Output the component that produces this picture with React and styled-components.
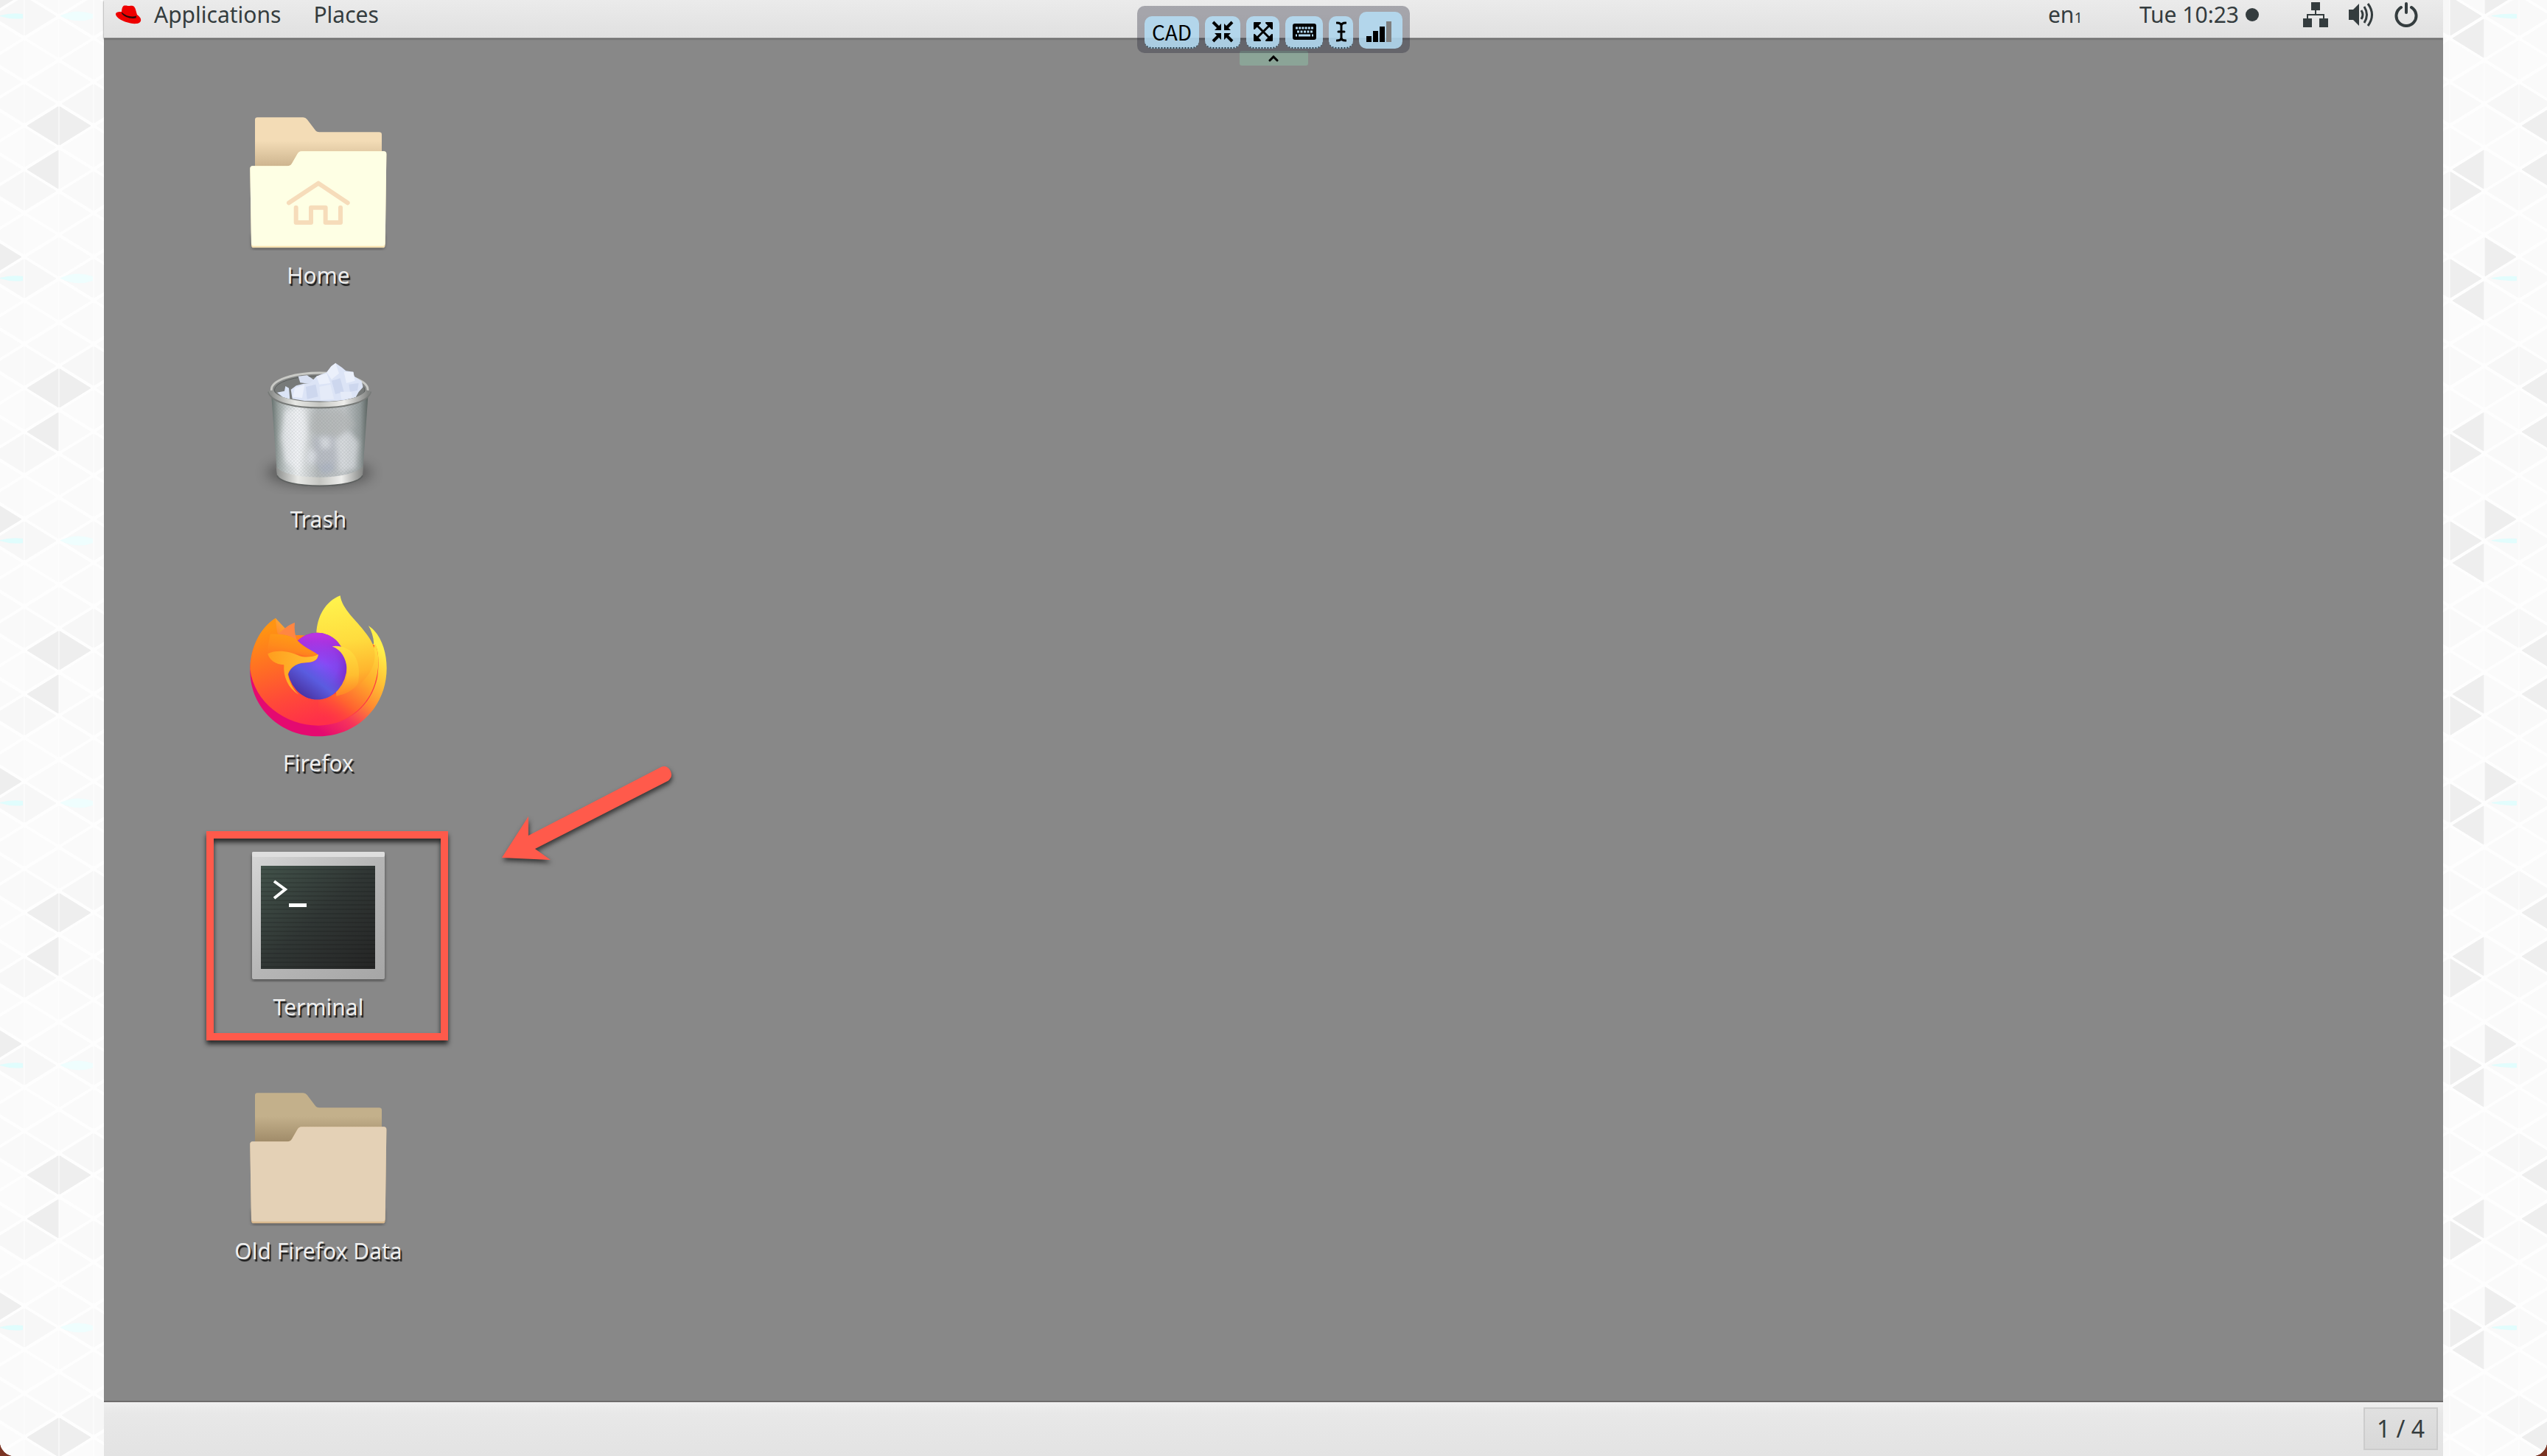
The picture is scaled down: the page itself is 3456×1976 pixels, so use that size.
import React from "react";
import styled, { createGlobalStyle } from "styled-components";

const GlobalStyle = createGlobalStyle`
  *, *::before, *::after { box-sizing: border-box; }
  html, body { margin: 0; background: #7a3424; }
  body { font-family: "Noto Sans", "Open Sans", sans-serif; }
  button {
    margin: 0;
    padding: 0;
    border: 0;
    background: none;
    color: inherit;
    font: inherit;
    cursor: pointer;
  }
  svg { display: block; }
`;

const ink = "#343c3e";
const accent = "#ff5a4b";

const Viewer = styled.div`
  position: relative;
  display: flex;
  min-height: 100vh;
  overflow: hidden;
  background: #fdfdfd;
  border-radius: 0 0 20px 20px;
`;

const Flank = styled.div`
  flex: 0 0 141px;
  background: #fefefe;
`;

const Session = styled.div`
  flex: 1;
  min-width: 0;
  display: flex;
  flex-direction: column;
  background: #888888;
`;

const TopBar = styled.header`
  display: flex;
  justify-content: space-between;
  height: 52px;
  padding: 0 34px 12px 16px;
  color: ${ink};
  font-size: 30px;
  line-height: 40px;
  background: linear-gradient(#ebebeb, #e0e0e0);
  border-bottom: 1px solid #a0a0a0;
  box-shadow: 0 1px 2px #5c5c5c;
`;

const BarGroup = styled.div`
  display: flex;
  align-items: center;
  gap: ${(p) => p.$gap}px;
`;

const MenuButton = styled.button`
  display: flex;
  align-items: ${(p) => (p.$baseline ? "baseline" : "center")};
  gap: ${(p) => p.$gap || 0}px;
  height: 40px;
`;

const LayoutIndex = styled.span`
  font-size: 20px;
`;

const Dot = styled.span`
  width: 18px;
  height: 18px;
  border-radius: 50%;
  background: ${ink};
`;

const Surface = styled.main`
  position: relative;
  flex: 1;
  display: flex;
  flex-direction: column;
  align-items: flex-start;
  gap: 85px;
  padding: 98px 0 0 141px;
`;

const Launcher = styled.button`
  display: flex;
  flex-direction: column;
  align-items: center;
  gap: 12px;
  width: 300px;
`;

const LauncherLabel = styled.span`
  color: #eeeeee;
  font-size: 30px;
  line-height: 44px;
  white-space: nowrap;
  text-shadow: 2px 3px 1px #1c1c1c;
`;

const Highlight = styled.div`
  position: absolute;
  left: 139px;
  top: 1076px;
  width: 328px;
  height: 284px;
  border: 10px solid ${accent};
  filter: drop-shadow(0 5px 3px rgba(0, 0, 0, 0.7));
`;

const Arrow = styled.svg`
  position: absolute;
  left: 529px;
  top: 978px;
  overflow: visible;
  filter: drop-shadow(1px 4px 3px rgba(0, 0, 0, 0.6));
`;

const BottomPanel = styled.footer`
  display: flex;
  justify-content: flex-end;
  height: 75px;
  padding: 7px 7px;
  background: linear-gradient(#f0f0f0, #e8e8e8 14px, #e3e3e3);
  border-top: 2px solid #6e6c6c;
`;

const Pager = styled.button`
  width: 101px;
  height: 58px;
  color: ${ink};
  font-size: 32px;
  line-height: 50px;
  background: linear-gradient(#e0e0e0, #d8d8d8);
  border: 2px solid #cccccc;
`;

const Remote = styled.div`
  position: absolute;
  top: 8px;
  left: 50%;
  transform: translateX(-50%);
  display: flex;
  flex-direction: column;
  align-items: center;
`;

const RemoteBar = styled.div`
  position: relative;
  z-index: 1;
  display: flex;
  align-items: flex-end;
  gap: 8px;
  padding: 8px 10px 6px;
  border-radius: 10px;
  background: rgba(30, 30, 48, 0.33);
`;

const RemoteButton = styled.button`
  display: flex;
  align-items: center;
  justify-content: center;
  width: ${(p) => p.$width}px;
  height: ${(p) => (p.$tall ? 50 : 44)}px;
  padding-top: ${(p) => (p.$tall ? 6 : 0)}px;
  padding-right: ${(p) => (p.$tall ? 6 : 0)}px;
  border-radius: 10px;
  border-bottom: 2px ${(p) => (p.$tall ? "solid transparent" : "dotted #2d4452")};
  background: rgba(182, 222, 246, 0.86);
  color: #000000;
  font-family: "Noto Sans CJK SC", "Noto Sans", sans-serif;
  font-size: 28px;
  line-height: 40px;
`;

const RemoteTab = styled.button`
  display: flex;
  align-items: center;
  justify-content: center;
  width: 93px;
  height: 20px;
  margin-top: -3px;
  border-radius: 3px;
  background: #8ba497;
`;

const ROW = 356 / 6;
const COL = 47;

function hash(a, b) {
  return (a * 7 + b * 13 + a * b * 5) % 4;
}

function TrianglePattern({ id, start, dark, glints }) {
  const tones = ["#f7f7f7", "#fafafa", "#f9f9f9", "#fbfbfb"];
  const cells = [];
  for (let c = 0; c < 4; c += 1) {
    const left = start + c * COL;
    const right = left + COL;
    for (let r = -1; r < 7; r += 1) {
      const leftY = (c % 2 ? 52 : 22) + r * ROW;
      const rightY = (c % 2 ? 22 : 52) + r * ROW;
      const row = (r + 6) % 6;
      cells.push({
        key: `l${c}-${r}`,
        d: `M${left + 4} ${leftY}L${right - 1} ${leftY - 26}V${leftY + 26}Z`,
        fill: dark.includes(`l${c}-${row}`) ? "#eeeeee" : tones[hash(c, row)],
      });
      cells.push({
        key: `r${c}-${r}`,
        d: `M${right - 4} ${rightY}L${left + 1} ${rightY - 26}V${rightY + 26}Z`,
        fill: dark.includes(`r${c}-${row}`) ? "#eeeeee" : tones[hash(c + 1, row + 2)],
      });
    }
  }
  return (
    <svg width="100%" height="100%" aria-hidden="true">
      <defs>
        <pattern id={id} width="188" height="356" patternUnits="userSpaceOnUse">
          {cells.map((cell) => (
            <path key={cell.key} d={cell.d} fill={cell.fill} stroke={cell.fill} strokeWidth="1" strokeLinejoin="round" />
          ))}
          {glints.map((g) => (
            <path
              key={g.x}
              d={`M${g.x} 21Q${g.x + g.w / 2} ${22 - g.h} ${g.x + g.w} 19V25Q${g.x + g.w / 2} ${22 + g.h} ${g.x} 22Z`}
              fill={g.fill}
            />
          ))}
        </pattern>
      </defs>
      <rect width="100%" height="100%" fill={`url(#${id})`} />
    </svg>
  );
}

function HatIcon() {
  return (
    <svg width="35" height="28" viewBox="0 0 35 28" aria-hidden="true">
      <path
        d="M8 12C8 6 9 2 12 1.500C15 1 16 2.500 19 2C23 1.500 25.500 2 27 7L29 14C32 16 35 19 34 22.500C33 26 27 27 20 25.500C10 23.500 0 18 0 13C0 10.500 4 9.500 8 10Z"
        fill="#ee0000"
      />
      <path d="M8 12C11 17 20 20 27.500 18.500L28 15.500C21 18 12 15 8.500 10.500Z" fill="#2a0a0a" />
    </svg>
  );
}

function NetworkIcon() {
  return (
    <svg width="34" height="34" viewBox="0 0 34 34" aria-hidden="true">
      <g fill={ink}>
        <rect x="11" width="12" height="11" />
        <rect y="22" width="12" height="12" />
        <rect x="22" y="22" width="12" height="12" />
      </g>
      <path d="M17 10V17M6 23V17H28V23" fill="none" stroke={ink} strokeWidth="2" />
    </svg>
  );
}

function VolumeIcon() {
  return (
    <svg width="34" height="32" viewBox="0 0 34 32" aria-hidden="true">
      <path d="M0 9H6L14 1V31L6 23H0Z" fill={ink} />
      <g fill="none" stroke={ink} strokeWidth="3">
        <path d="M17 10Q21 16 17 22" />
        <path d="M21 5Q28 16 21 27" />
        <path d="M26 1Q37 16 26 31" />
      </g>
    </svg>
  );
}

function PowerIcon() {
  return (
    <svg width="32" height="34" viewBox="0 0 32 34" aria-hidden="true">
      <path d="M9 7A13.500 13.500 0 1 0 23 7" fill="none" stroke={ink} strokeWidth="4" strokeLinecap="round" />
      <path d="M16 2V14" stroke={ink} strokeWidth="4" strokeLinecap="round" />
    </svg>
  );
}

function FolderIcon({ id, back, backEdge, front, lip, home }) {
  return (
    <svg width="200" height="190" viewBox="96 60 600 570" aria-hidden="true">
      <defs>
        <linearGradient id={`${id}-back`} x1="0" y1="0" x2="0" y2="1">
          <stop offset="0.450" stopColor={back} />
          <stop offset="1" stopColor={backEdge} />
        </linearGradient>
        <filter id={`${id}-soft`} x="-10%" y="-10%" width="120%" height="120%">
          <feGaussianBlur stdDeviation="7" />
        </filter>
      </defs>
      <rect x="124" y="560" width="542" height="64" rx="12" fill="#000000" opacity="0.350" filter={`url(#${id}-soft)`} />
      <path
        d="M138 98Q138 88 148 88H334Q344 88 350 96L382 138Q388 148 400 148H643Q654 148 654 158V300H138Z"
        fill={`url(#${id}-back)`}
      />
      <path
        d="M118 297Q118 286 128 286H270Q282 286 288 276L310 238Q316 226 328 226H662Q673 226 673 237L668 608Q668 619 658 619H133Q123 619 123 608Z"
        fill={lip}
      />
      <path
        d="M118 297Q118 286 128 286H270Q282 286 288 276L310 238Q316 226 328 226H662Q673 226 673 237L668 600Q668 611 658 611H133Q123 611 123 600Z"
        fill={front}
      />
      {home && (
        <g fill="none" stroke="#f6dcba" strokeWidth="18" strokeLinecap="round" strokeLinejoin="round">
          <path d="M276 436L396 356L515 436" />
          <path d="M305 455V516H366V455H425V516H486V455" />
        </g>
      )}
    </svg>
  );
}

function TrashIcon() {
  return (
    <svg width="200" height="190" viewBox="96 63 600 570" aria-hidden="true">
      <defs>
        <linearGradient id="bin-body" x1="0" x2="1">
          <stop offset="0" stopColor="#66716e" />
          <stop offset="0.070" stopColor="#9aa3a1" />
          <stop offset="0.160" stopColor="#c9cfd0" />
          <stop offset="0.270" stopColor="#eceff0" />
          <stop offset="0.480" stopColor="#b4b9ba" />
          <stop offset="0.750" stopColor="#c2c6c8" />
          <stop offset="0.920" stopColor="#929a9a" />
          <stop offset="1" stopColor="#59625f" />
        </linearGradient>
        <linearGradient id="bin-rim" x1="0" x2="1">
          <stop offset="0" stopColor="#8c8e8c" />
          <stop offset="0.250" stopColor="#e8e9e6" />
          <stop offset="0.500" stopColor="#c4c5c1" />
          <stop offset="0.750" stopColor="#eeeeec" />
          <stop offset="1" stopColor="#828482" />
        </linearGradient>
        <pattern id="bin-mesh" width="10" height="10" patternUnits="userSpaceOnUse" patternTransform="rotate(45)">
          <path d="M0 0H10M0 0V10" stroke="#6e7676" strokeWidth="2" opacity="0.350" />
        </pattern>
        <filter id="bin-soft" x="-30%" y="-60%" width="160%" height="220%">
          <feGaussianBlur stdDeviation="26" />
        </filter>
        <filter id="bin-paper" x="-10%" y="-10%" width="120%" height="120%">
          <feGaussianBlur stdDeviation="9" />
        </filter>
      </defs>
      <ellipse cx="400" cy="545" rx="215" ry="52" fill="#000000" opacity="0.350" filter="url(#bin-soft)" />
      <ellipse cx="401" cy="206" rx="196" ry="68" fill="#858786" stroke="#c9cac6" strokeWidth="9" />
      <ellipse cx="401" cy="208" rx="184" ry="58" fill="#777a79" stroke="#585b5a" strokeWidth="3" />
      <path d="M205 235L228 552C250 615 552 615 576 552L598 235C560 290 245 290 205 235Z" fill="url(#bin-body)" />
      <g filter="url(#bin-paper)" opacity="0.700">
        <path d="M260 290L340 284L350 380L320 540L262 500L244 400Z" fill="#f3f4f8" />
        <path d="M370 400L455 390L520 470L450 520L380 510Z" fill="#b9bdc7" />
        <path d="M465 410L520 375L560 420L548 530L480 540Z" fill="#dfe2e6" />
        <path d="M370 300L500 290L545 350L470 400L360 380Z" fill="#b5b8b8" />
        <path d="M400 400L440 402L446 440L410 450ZM360 440L390 470L370 520L345 490Z" fill="#e4e7ee" />
        <path d="M390 520L440 500L470 530L420 552Z" fill="#aab2c4" />
      </g>
      <path d="M205 235L228 552C250 615 552 615 576 552L598 235C560 290 245 290 205 235Z" fill="url(#bin-mesh)" />
      <path d="M224 520C262 578 540 578 579 515L576 556C550 614 250 614 228 556Z" fill="url(#bin-rim)" />
      <path d="M228 556C250 612 552 612 576 556" fill="none" stroke="#5d605f" strokeWidth="5" />
      <g>
        <path d="M228 218L258 212L262 192L276 200L280 246L250 236Z" fill="#dbe4f6" />
        <path d="M314 152L350 148L380 168L370 184L322 178Z" fill="#d8e0f2" />
        <path d="M284 206L306 190L336 182L362 180L388 152L430 136L448 112L466 98L492 116L508 130L538 134L542 152L572 172L578 196L560 216L548 238L500 250L440 254L340 252L290 244Z" fill="#dce4f6" />
        <path d="M448 112L466 98L480 140L450 165L430 136ZM388 152L430 140L445 180L400 185ZM500 134L538 134L545 170L510 180ZM300 200L340 186L330 240L292 236Z" fill="#ebf0fb" />
        <path d="M345 195L385 185L395 235L350 245ZM450 170L485 160L500 215L465 225ZM520 185L560 180L555 210L525 215Z" fill="#cdd7ee" />
        <path d="M400 195L445 185L460 245L405 248ZM485 215L530 215L535 240L490 246Z" fill="#e5ebf8" />
      </g>
      <path d="M202 212C220 290 580 290 600 212" fill="none" stroke="#777a78" strokeWidth="26" />
      <path d="M203 210C222 286 578 286 599 210" fill="none" stroke="url(#bin-rim)" strokeWidth="20" />
    </svg>
  );
}

function FirefoxIcon() {
  return (
    <svg width="200" height="190" viewBox="96 96 600 570" overflow="visible" aria-hidden="true">
      <defs>
        <linearGradient id="fx-outer" gradientUnits="userSpaceOnUse" x1="610" y1="200" x2="270" y2="640">
          <stop offset="0.100" stopColor="#fff04a" />
          <stop offset="0.300" stopColor="#ffc135" />
          <stop offset="0.480" stopColor="#ff8a30" />
          <stop offset="0.660" stopColor="#f7355a" />
          <stop offset="0.850" stopColor="#e40a70" />
        </linearGradient>
        <linearGradient id="fx-body" gradientUnits="userSpaceOnUse" x1="250" y1="200" x2="370" y2="600">
          <stop offset="0" stopColor="#ff9412" />
          <stop offset="0.400" stopColor="#ff6a26" />
          <stop offset="0.700" stopColor="#ff4a38" />
          <stop offset="1" stopColor="#ff3049" />
        </linearGradient>
        <linearGradient id="fx-head" gradientUnits="userSpaceOnUse" x1="290" y1="250" x2="270" y2="350">
          <stop offset="0" stopColor="#ff9a16" />
          <stop offset="0.500" stopColor="#ff8a1c" />
          <stop offset="1" stopColor="#ff7a22" stopOpacity="0" />
        </linearGradient>
        <linearGradient id="fx-sweep" gradientUnits="userSpaceOnUse" x1="630" y1="310" x2="420" y2="590">
          <stop offset="0" stopColor="#ffd93c" />
          <stop offset="0.350" stopColor="#ffa92b" />
          <stop offset="0.700" stopColor="#ff6230" />
          <stop offset="1" stopColor="#ff3a40" stopOpacity="0" />
        </linearGradient>
        <linearGradient id="fx-flame" gradientUnits="userSpaceOnUse" x1="500" y1="100" x2="560" y2="470">
          <stop offset="0" stopColor="#fff24c" />
          <stop offset="0.450" stopColor="#ffdc3e" />
          <stop offset="0.800" stopColor="#ffb52e" />
          <stop offset="1" stopColor="#ff8c28" />
        </linearGradient>
        <linearGradient id="fx-inner" gradientUnits="userSpaceOnUse" x1="500" y1="290" x2="510" y2="490">
          <stop offset="0" stopColor="#ffe040" />
          <stop offset="0.600" stopColor="#ffbe30" />
          <stop offset="1" stopColor="#ff8426" />
        </linearGradient>
        <radialGradient id="fx-globe" gradientUnits="userSpaceOnUse" cx="390" cy="370" r="150">
          <stop offset="0" stopColor="#8a50ff" />
          <stop offset="0.550" stopColor="#8144ec" />
          <stop offset="1" stopColor="#7a22b8" />
        </radialGradient>
        <linearGradient id="fx-globe-low" gradientUnits="userSpaceOnUse" x1="430" y1="360" x2="330" y2="490">
          <stop offset="0" stopColor="#5a5ce0" stopOpacity="0" />
          <stop offset="0.500" stopColor="#5a5ce0" />
          <stop offset="1" stopColor="#4a34a4" />
        </linearGradient>
        <linearGradient id="fx-globe-top" x1="0" y1="0" x2="0" y2="1">
          <stop offset="0.050" stopColor="#b933e2" />
          <stop offset="0.500" stopColor="#a030e0" stopOpacity="0" />
        </linearGradient>
        <linearGradient id="fx-cheek" x1="0" x2="1">
          <stop offset="0" stopColor="#ff9d1e" />
          <stop offset="1" stopColor="#ffc232" />
        </linearGradient>
      </defs>
      <path
        d="M118 390C118 300 160 215 222 177L300 260L600 300L622 280C620 252 612 228 600 208C648 238 674 310 674 380C674 540 550 658 396 658C245 658 118 545 118 390Z"
        fill="url(#fx-outer)"
      />
      <path
        d="M118 385C118 300 158 215 222 177C224 205 226 228 232 246C320 240 600 260 630 290C644 320 642 380 636 420C610 540 510 614 396 614C260 614 135 520 118 385Z"
        fill="url(#fx-body)"
      />
      <path d="M628 280C650 340 642 420 606 490C560 570 480 614 396 614V490C520 500 590 420 610 330Z" fill="url(#fx-sweep)" />
      <path
        d="M388 240C390 170 425 108 485 85C492 140 550 185 588 236C610 264 626 290 626 330C624 400 560 470 470 494L440 300Z"
        fill="url(#fx-flame)"
      />
      <ellipse cx="391" cy="372" rx="121" ry="136" fill="url(#fx-globe)" />
      <ellipse cx="391" cy="372" rx="121" ry="136" fill="url(#fx-globe-top)" />
      <ellipse cx="391" cy="372" rx="121" ry="136" fill="url(#fx-globe-low)" />
      <path d="M452 292C470 288 494 292 515 303C556 325 568 380 558 440C540 470 505 488 470 492C505 460 515 420 512 380C508 340 490 306 452 292Z" fill="url(#fx-inner)" />
      <path d="M232 246C250 222 275 204 300 195C297 220 300 245 310 270Z" fill="#ff8642" />
      <path
        d="M200 242C250 238 285 248 310 268C340 298 370 308 395 326C392 350 378 356 340 358C300 360 275 385 272 412C280 450 300 480 330 496L250 500L180 380Z"
        fill="url(#fx-body)"
      />
      <path
        d="M200 242C262 240 295 254 310 268C340 298 370 308 395 326C370 334 350 334 332 328C300 312 240 320 180 350Z"
        fill="url(#fx-head)"
      />
      <path
        d="M190 322C225 302 282 312 318 330C340 338 370 336 396 325C392 350 376 356 344 358C300 360 276 385 272 408C284 450 296 470 316 488C272 462 252 414 256 367C222 366 196 346 190 322Z"
        fill="url(#fx-cheek)"
      />
    </svg>
  );
}

function TerminalIcon() {
  return (
    <svg width="200" height="190" viewBox="0 0 200 190" aria-hidden="true">
      <defs>
        <linearGradient id="tm-case" x1="0" y1="0" x2="1" y2="1">
          <stop offset="0" stopColor="#d6d6d6" />
          <stop offset="0.500" stopColor="#b6b6b6" />
          <stop offset="1" stopColor="#a6a6a6" />
        </linearGradient>
        <linearGradient id="tm-screen" x1="0" y1="0" x2="1" y2="1">
          <stop offset="0" stopColor="#42524a" />
          <stop offset="0.500" stopColor="#303634" />
          <stop offset="1" stopColor="#252525" />
        </linearGradient>
        <pattern id="tm-lines" width="6" height="6" patternUnits="userSpaceOnUse">
          <rect width="6" height="2" fill="#000000" opacity="0.120" />
        </pattern>
        <filter id="tm-soft" x="-10%" y="-10%" width="120%" height="120%">
          <feGaussianBlur stdDeviation="2" />
        </filter>
      </defs>
      <rect x="10" y="16" width="180" height="172" rx="2" fill="#000000" opacity="0.450" filter="url(#tm-soft)" />
      <rect x="10" y="13" width="180" height="173" rx="2" fill="url(#tm-case)" />
      <rect x="10" y="13" width="180" height="7" rx="2" fill="#dedede" />
      <rect x="22" y="32" width="155" height="140" fill="url(#tm-screen)" />
      <rect x="22" y="32" width="155" height="140" fill="url(#tm-lines)" />
      <path d="M40 53L55 64L40 76" fill="none" stroke="#ffffff" strokeWidth="4" />
      <rect x="60" y="83" width="24" height="5" fill="#ffffff" />
    </svg>
  );
}

function CompressIcon() {
  return (
    <svg width="30" height="30" viewBox="0 0 30 30" aria-hidden="true">
      <path d="M2 2L9 9M28 2L21 9M2 28L9 21M28 28L21 21" stroke="#000000" strokeWidth="4" />
      <path d="M13 4V13H4ZM17 4V13H26ZM13 26V17H4ZM17 26V17H26Z" fill="#000000" />
    </svg>
  );
}

function ExpandIcon() {
  return (
    <svg width="26" height="26" viewBox="0 0 26 26" aria-hidden="true">
      <path d="M4 4L22 22M22 4L4 22" stroke="#000000" strokeWidth="3" />
      <path
        d="M1 1H9L1 9ZM25 1H17L25 9ZM1 25H9L1 17ZM25 25H17L25 17Z"
        fill="#000000"
        stroke="#000000"
        strokeWidth="2"
        strokeLinejoin="round"
      />
    </svg>
  );
}

function KeyboardIcon() {
  return (
    <svg width="32" height="22" viewBox="0 0 32 22" aria-hidden="true">
      <rect width="32" height="22" rx="3" fill="#000000" />
      <g fill="none" stroke="#b2d8f0" strokeWidth="3">
        <path d="M4 6H28" strokeDasharray="3 1.200" />
        <path d="M6 11H27" strokeDasharray="3 1.500" />
        <path d="M4 16H6M8 16H24M26 16H28" />
      </g>
    </svg>
  );
}

function CursorIcon() {
  return (
    <svg width="14" height="28" viewBox="0 0 14 28" aria-hidden="true">
      <path
        d="M1 2C4 2 7 3 7 6C7 3 10 2 13 2M7 5V23M1 26C4 26 7 25 7 22C7 25 10 26 13 26M3 14H11"
        fill="none"
        stroke="#000000"
        strokeWidth="3"
        strokeLinecap="round"
      />
    </svg>
  );
}

function SignalIcon() {
  return (
    <svg width="34" height="28" viewBox="0 0 34 28" aria-hidden="true">
      <path d="M0 20H7V28H0ZM9 13H16V28H9ZM18 7H25V28H18Z" fill="#000000" />
      <path d="M27 0H34V28H27Z" fill="#7f7f7f" />
    </svg>
  );
}

const launchers = [
  {
    name: "Home",
    icon: <FolderIcon id="home" back="#f3dcb6" backEdge="#c9b08a" front="#feffe4" lip="#f7e3b4" home />,
  },
  { name: "Trash", icon: <TrashIcon /> },
  { name: "Firefox", icon: <FirefoxIcon /> },
  { name: "Terminal", icon: <TerminalIcon /> },
  {
    name: "Old Firefox Data",
    icon: <FolderIcon id="data" back="#c3b08b" backEdge="#9c8765" front="#e4d1b6" lip="#d9b98f" />,
  },
];

export default function App() {
  return (
    <>
      <GlobalStyle />
      <Viewer>
        <Flank>
          <TrianglePattern
            id="flank-left"
            start={-14}
            dark={["l1-2", "l1-3", "r2-2", "r0-5"]}
            glints={[
              { x: 0, w: 31, h: 5, fill: "#e0fdfd" },
              { x: 82, w: 44, h: 11, fill: "#effefe" },
            ]}
          />
        </Flank>
        <Session>
          <TopBar>
            <BarGroup $gap={44}>
              <MenuButton $gap={17}>
                <HatIcon />
                Applications
              </MenuButton>
              <MenuButton>Places</MenuButton>
            </BarGroup>
            <BarGroup $gap={60}>
              <BarGroup $gap={77}>
                <MenuButton $baseline aria-label="Keyboard layout">
                  en<LayoutIndex>1</LayoutIndex>
                </MenuButton>
                <MenuButton $gap={9}>
                  Tue 10:23
                  <Dot />
                </MenuButton>
              </BarGroup>
              <BarGroup $gap={28}>
                <MenuButton aria-label="Network"><NetworkIcon /></MenuButton>
                <MenuButton aria-label="Volume"><VolumeIcon /></MenuButton>
                <MenuButton aria-label="Power"><PowerIcon /></MenuButton>
              </BarGroup>
            </BarGroup>
          </TopBar>
          <Surface>
            {launchers.map((item) => (
              <Launcher key={item.name}>
                {item.icon}
                <LauncherLabel>{item.name}</LauncherLabel>
              </Launcher>
            ))}
            <Highlight />
            <Arrow width="250" height="140" viewBox="670 1030 250 140" aria-hidden="true">
              <path
                d="M681 1164L717 1108V1134L897 1041C907 1036 915 1051 909 1057C908 1059 906 1060 904 1061L726 1152L747 1167Z"
                fill={accent}
              />
            </Arrow>
          </Surface>
          <BottomPanel>
            <Pager>1 / 4</Pager>
          </BottomPanel>
        </Session>
        <Flank>
          <TrianglePattern
            id="flank-right"
            start={-38}
            dark={["r1-0", "l1-0", "l1-3", "r1-4", "r2-5", "l3-2", "l3-3"]}
            glints={[{ x: 66, w: 34, h: 4, fill: "#e2fdfd" }]}
          />
        </Flank>
        <Remote>
          <RemoteBar>
            <RemoteButton $width={74}>CAD</RemoteButton>
            <RemoteButton $width={48} aria-label="Shrink"><CompressIcon /></RemoteButton>
            <RemoteButton $width={45} aria-label="Expand"><ExpandIcon /></RemoteButton>
            <RemoteButton $width={51} aria-label="Keyboard"><KeyboardIcon /></RemoteButton>
            <RemoteButton $width={33} aria-label="Text cursor"><CursorIcon /></RemoteButton>
            <RemoteButton $width={59} $tall aria-label="Signal strength"><SignalIcon /></RemoteButton>
          </RemoteBar>
          <RemoteTab aria-label="Collapse toolbar">
            <svg width="14" height="9" viewBox="0 0 14 9" aria-hidden="true">
              <path d="M2 7L7 2L12 7" fill="none" stroke="#000000" strokeWidth="3" strokeLinecap="round" />
            </svg>
          </RemoteTab>
        </Remote>
      </Viewer>
    </>
  );
}
